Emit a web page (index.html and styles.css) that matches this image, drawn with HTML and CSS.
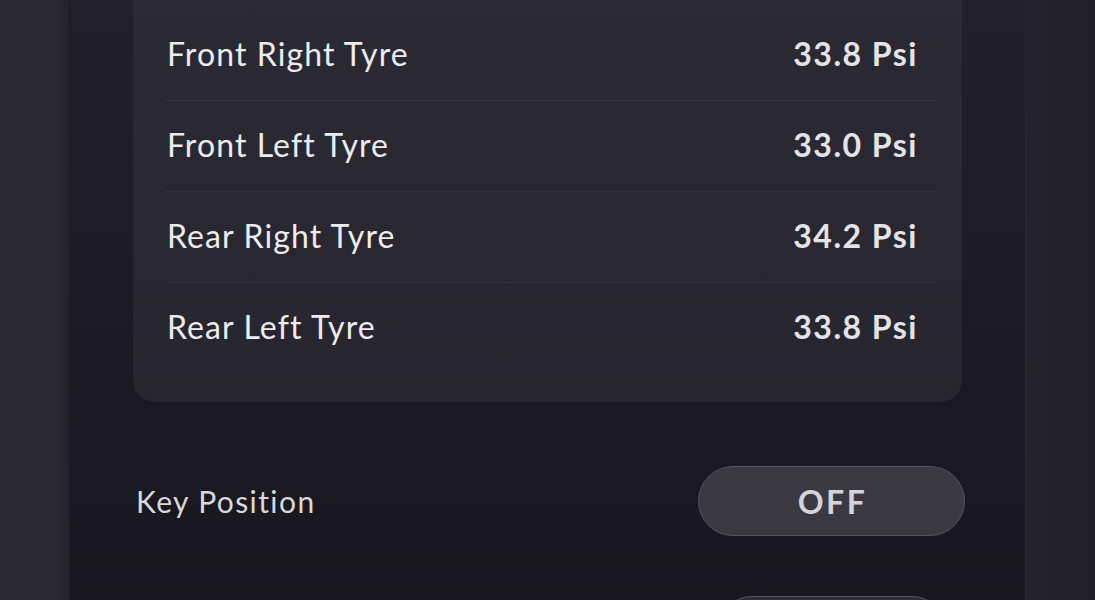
FILE: index.html
```html
<!DOCTYPE html>
<html lang="en">
<head>
    <meta charset="UTF-8">
    <meta name="viewport" content="width=device-width, initial-scale=1.0">
    <title>Vehicle Status</title>
    <link rel="stylesheet" href="styles.css">
</head>
<body>
    <div class="screen">
        <div class="side side-left"></div>

        <div class="panel">
            <div class="tyre-card">
                <div class="tyre-row">
                    <span class="tyre-name">Front Right Tyre</span>
                    <span class="tyre-value">33.8 Psi</span>
                </div>
                <div class="tyre-row">
                    <span class="tyre-name">Front Left Tyre</span>
                    <span class="tyre-value">33.0 Psi</span>
                </div>
                <div class="tyre-row">
                    <span class="tyre-name">Rear Right Tyre</span>
                    <span class="tyre-value">34.2 Psi</span>
                </div>
                <div class="tyre-row">
                    <span class="tyre-name">Rear Left Tyre</span>
                    <span class="tyre-value">33.8 Psi</span>
                </div>
            </div>

            <div class="setting-row">
                <span class="setting-label">Key Position</span>
                <div class="pill-slot">
                    <button type="button" class="pill">OFF</button>
                </div>
            </div>

            <div class="setting-row next">
                <span class="setting-label"></span>
                <div class="pill-slot">
                    <div class="pill pill-small"></div>
                </div>
            </div>
        </div>

        <div class="side side-right"></div>
    </div>
</body>
</html>
```

FILE: styles.css
```css
html, body {
    margin: 0;
    height: 100%;
    overflow: hidden;
}
body {
    font-family: Lato, "Noto Sans", sans-serif;
    background-color: #1c1b24;
    color: #e8e8ec;
}
.screen {
    display: flex;
    height: 600px;
    overflow: hidden;
}
.side {
    width: 70px;
    flex-shrink: 0;
}
.side-left {
    background: linear-gradient(90deg, #29282f 0%, #2a2931 80%, #23222a 100%);
    border-right: 1px solid #1d1c24;
    box-sizing: border-box;
}
.side-right {
    background: linear-gradient(90deg, #24232b 0%, #211f28 100%);
    border-left: 1px solid #2b2a33;
    box-sizing: border-box;
}
.panel {
    flex: 1;
    padding: 0 63px;
    background: linear-gradient(180deg, #22212b 0%, #1b1a24 60%, #181720 100%);
}
.tyre-card {
    margin-top: -20px;
    padding: 30px 27px 29px 32px;
    background: linear-gradient(180deg, #2b2a34 0%, #27262f 100%);
    border-radius: 22px;
}
.tyre-row {
    display: flex;
    justify-content: space-between;
    align-items: center;
    height: 90px;
    padding: 0 17px 0 2px;
    border-bottom: 1px solid #35343e;
}
.tyre-row:last-child {
    border-bottom: none;
}
.tyre-name {
    font-size: 32px;
    letter-spacing: 1.1px;
    color: #ececf0;
    margin-top: -4px;
}
.tyre-value {
    font-size: 32px;
    font-weight: bold;
    letter-spacing: 1.5px;
    color: #e4e4e8;
    margin-top: -4px;
}
.setting-row {
    display: flex;
    justify-content: space-between;
    align-items: center;
    margin: 64px -3px 0 3px;
}
.setting-row.next {
    margin-top: 60px;
}
.setting-label {
    font-size: 30px;
    letter-spacing: 1.4px;
    color: #d8d8dc;
}
.pill-slot {
    width: 267px;
    display: flex;
    justify-content: center;
}
.pill {
    width: 267px;
    height: 70px;
    border-radius: 35px;
    border: 1px solid #55545d;
    background-color: #3a3942;
    color: #d4d4d8;
    font-family: Lato, "Noto Sans", sans-serif;
    font-size: 32px;
    font-weight: bold;
    letter-spacing: 2.5px;
    padding: 0 0 0 2px;
    cursor: pointer;
    box-sizing: border-box;
}
.pill-small {
    width: 230px;
    background-color: #2e2d36;
}
```
